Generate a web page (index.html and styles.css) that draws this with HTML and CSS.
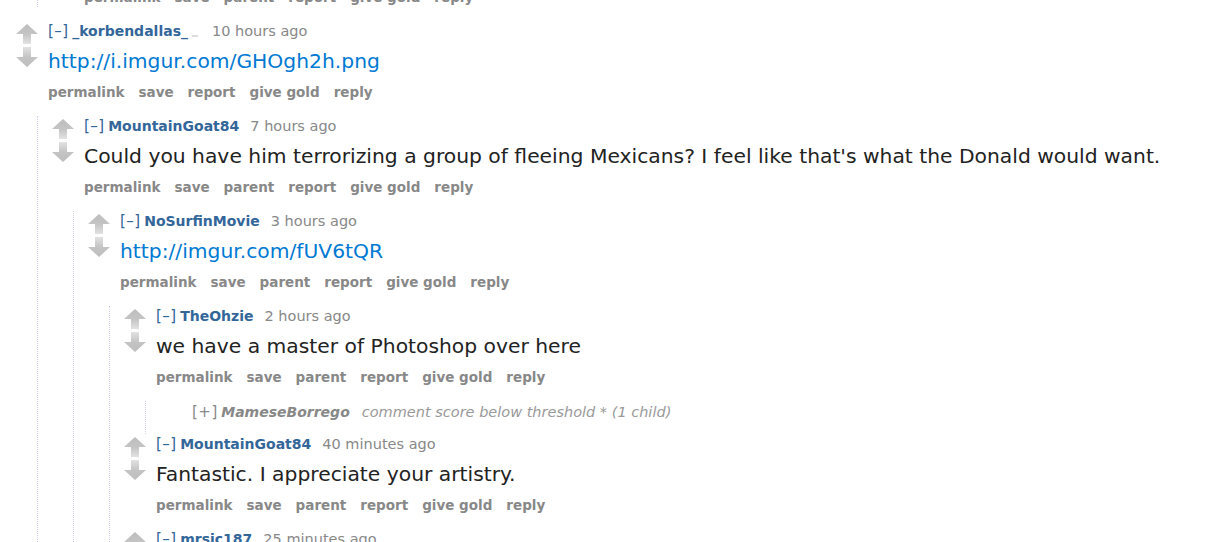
FILE: index.html
```html
<!DOCTYPE html>
<html>
<head>
<meta charset="utf-8">
<link rel="stylesheet" href="styles.css">
</head>
<body>
<svg width="0" height="0" class="defs">
  <defs>
    <linearGradient id="gup" x1="0" y1="0" x2="0" y2="1">
      <stop offset="0" stop-color="#bdbdbd"/>
      <stop offset="0.5" stop-color="#c4c4c4"/>
      <stop offset="1" stop-color="#e2e2e2"/>
    </linearGradient>
    <linearGradient id="gdown" x1="0" y1="0" x2="0" y2="1">
      <stop offset="0" stop-color="#e2e2e2"/>
      <stop offset="0.5" stop-color="#c4c4c4"/>
      <stop offset="1" stop-color="#bdbdbd"/>
    </linearGradient>
    <symbol id="up" viewBox="0 0 22 20"><polygon points="11,0 22,10 15,10 15,20 7,20 7,10 0,10" fill="url(#gup)"/></symbol>
    <symbol id="down" viewBox="0 0 22 20"><polygon points="7,0 15,0 15,10 22,10 11,20 0,10 7,10" fill="url(#gdown)"/></symbol>
  </defs>
</svg>
<div class="page">
  <div class="comment stub">
    <div class="child">
      <div class="comment">
        <div class="row">
          <div class="midcol"></div>
          <div class="entry">
            <ul class="buttons"><li>permalink</li><li>save</li><li>parent</li><li>report</li><li>give gold</li><li>reply</li></ul>
          </div>
        </div>
      </div>
    </div>
  </div>

  <div class="comment">
    <div class="row">
      <div class="midcol"><svg class="arrow"><use href="#up"/></svg><svg class="arrow"><use href="#down"/></svg></div>
      <div class="entry">
        <p class="tagline"><span class="expand">[–]</span> <span class="author">_korbendallas_</span><span class="flair"></span><span class="time">10 hours ago</span></p>
        <div class="md"><a href="#">http://i.imgur.com/GHOgh2h.png</a></div>
        <ul class="buttons"><li>permalink</li><li>save</li><li>report</li><li>give gold</li><li>reply</li></ul>
      </div>
    </div>
    <div class="child">
      <div class="comment">
        <div class="row">
          <div class="midcol"><svg class="arrow"><use href="#up"/></svg><svg class="arrow"><use href="#down"/></svg></div>
          <div class="entry">
            <p class="tagline"><span class="expand">[–]</span> <span class="author">MountainGoat84</span><span class="time">7 hours ago</span></p>
            <div class="md">Could you have him terrorizing a group of fleeing Mexicans? I feel like that's what the Donald would want.</div>
            <ul class="buttons"><li>permalink</li><li>save</li><li>parent</li><li>report</li><li>give gold</li><li>reply</li></ul>
          </div>
        </div>
        <div class="child">
          <div class="comment">
            <div class="row">
              <div class="midcol"><svg class="arrow"><use href="#up"/></svg><svg class="arrow"><use href="#down"/></svg></div>
              <div class="entry">
                <p class="tagline"><span class="expand">[–]</span> <span class="author">NoSurfinMovie</span><span class="time">3 hours ago</span></p>
                <div class="md"><a href="#">http://imgur.com/fUV6tQR</a></div>
                <ul class="buttons"><li>permalink</li><li>save</li><li>parent</li><li>report</li><li>give gold</li><li>reply</li></ul>
              </div>
            </div>
            <div class="child">
              <div class="comment">
                <div class="row">
                  <div class="midcol"><svg class="arrow"><use href="#up"/></svg><svg class="arrow"><use href="#down"/></svg></div>
                  <div class="entry">
                    <p class="tagline"><span class="expand">[–]</span> <span class="author">TheOhzie</span><span class="time">2 hours ago</span></p>
                    <div class="md">we have a master of Photoshop over here</div>
                    <ul class="buttons"><li>permalink</li><li>save</li><li>parent</li><li>report</li><li>give gold</li><li>reply</li></ul>
                  </div>
                </div>
                <div class="child">
                  <div class="comment collapsed">
                    <div class="row">
                      <div class="midcol"></div>
                      <div class="entry">
                        <p class="tagline"><span class="expand">[+]</span> <span class="author">MameseBorrego</span><span class="note">comment score below threshold * (1 child)</span></p>
                      </div>
                    </div>
                  </div>
                </div>
              </div>
              <div class="comment">
                <div class="row">
                  <div class="midcol"><svg class="arrow"><use href="#up"/></svg><svg class="arrow"><use href="#down"/></svg></div>
                  <div class="entry">
                    <p class="tagline"><span class="expand">[–]</span> <span class="author">MountainGoat84</span><span class="time">40 minutes ago</span></p>
                    <div class="md">Fantastic. I appreciate your artistry.</div>
                    <ul class="buttons"><li>permalink</li><li>save</li><li>parent</li><li>report</li><li>give gold</li><li>reply</li></ul>
                  </div>
                </div>
              </div>
              <div class="comment">
                <div class="row">
                  <div class="midcol"><svg class="arrow"><use href="#up"/></svg><svg class="arrow"><use href="#down"/></svg></div>
                  <div class="entry">
                    <p class="tagline"><span class="expand">[–]</span> <span class="author">mrsic187</span><span class="time">25 minutes ago</span></p>
                    <div class="md">&nbsp;</div>
                  </div>
                </div>
              </div>
            </div>
          </div>
        </div>
      </div>
    </div>
  </div>
</div>
</body>
</html>
```

FILE: styles.css
```css
html, body {
  margin: 0;
  padding: 0;
  background: #fff;
  overflow: hidden;
}
body {
  font-family: "DejaVu Sans", Verdana, sans-serif;
  color: #222;
}
.defs {
  position: absolute;
  width: 0;
  height: 0;
}
.page {
  padding-left: 2px;
  margin-top: -13px;
}
.row {
  display: flex;
}
.midcol {
  margin-left: 14px;
  width: 22px;
  flex: none;
  padding-top: 3px;
  display: flex;
  flex-direction: column;
  gap: 3px;
}
.arrow {
  width: 22px;
  height: 20px;
  display: block;
}
.entry {
  margin-left: 10px;
  padding-bottom: 14px;
  flex: 1;
}
.child {
  margin-left: 35px;
  border-left: 1px dotted #cfd0e6;
}
.tagline {
  margin: 0;
  font-size: 14px;
  line-height: 20px;
  color: #888;
  white-space: nowrap;
}
.expand {
  color: #369;
  font-size: 15px;
  letter-spacing: 0.5px;
  margin-right: -1px;
}
.author {
  color: #369;
  font-weight: bold;
  margin-right: 11px;
}
.flair {
  display: inline-block;
  width: 6px;
  height: 2px;
  background: #ddd;
  margin: 0 14px 0 -7px;
  vertical-align: -1px;
}
.time {
  color: #888;
  font-size: 14.5px;
}
.md {
  margin-top: 7px;
  font-size: 20.3px;
  line-height: 26px;
  color: #222;
  white-space: nowrap;
}
.md a {
  color: #0079d3;
  text-decoration: none;
}
.buttons {
  list-style: none;
  margin: 8px 0 0 0;
  padding: 0;
  display: flex;
  gap: 14px;
  font-size: 13.5px;
  line-height: 20px;
  font-weight: bold;
  color: #888;
}
.stub .entry {
  padding-bottom: 0;
}
.stub .buttons {
  margin-top: 0;
}
.stub {
  padding-bottom: 14px;
}
.collapsed .entry {
  padding-bottom: 12px;
}
.collapsed .tagline {
  padding-top: 1px;
}
.collapsed .expand {
  color: #888;
}
.collapsed .author {
  color: #888;
  font-style: italic;
  margin-right: 12px;
}
.note {
  font-style: italic;
  color: #999;
  font-size: 14.5px;
}
```
